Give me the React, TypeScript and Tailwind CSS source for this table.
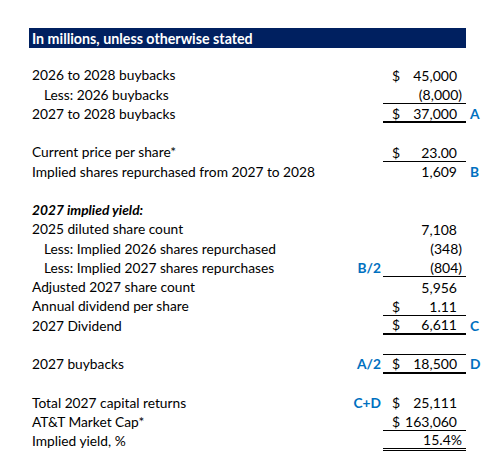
type Row = {
  label?: string;
  indent?: boolean;
  title?: boolean;
  note?: string;
  dollar?: boolean;
  value?: string;
  line?: string;
  mark?: string;
};

const rows: Row[] = [
  { label: '2026 to 2028 buybacks', dollar: true, value: '45,000' },
  { label: 'Less: 2026 buybacks', indent: true, value: '(8,000)', line: 'border-b border-black' },
  { label: '2027 to 2028 buybacks', dollar: true, value: '37,000', line: 'border-b-2 border-black', mark: 'A' },
  {},
  { label: 'Current price per share*', dollar: true, value: '23.00', line: 'border-b border-black' },
  { label: 'Implied shares repurchased from 2027 to 2028', value: '1,609', mark: 'B' },
  {},
  { label: '2027 implied yield:', title: true },
  { label: '2025 diluted share count', value: '7,108' },
  { label: 'Less: Implied 2026 shares repurchased', indent: true, value: '(348)' },
  { label: 'Less: Implied 2027 shares repurchases', indent: true, note: 'B/2', value: '(804)', line: 'border-b border-black' },
  { label: 'Adjusted 2027 share count', value: '5,956' },
  { label: 'Annual dividend per share', dollar: true, value: '1.11', line: 'border-b border-black' },
  { label: '2027 Dividend', dollar: true, value: '6,611', line: 'border-b-2 border-black', mark: 'C' },
  {},
  { label: '2027 buybacks', note: 'A/2', dollar: true, value: '18,500', line: 'border-t border-b-2 border-black', mark: 'D' },
  {},
  { label: 'Total 2027 capital returns', note: 'C+D', dollar: true, value: '25,111' },
  { label: 'AT&T Market Cap*', dollar: true, value: '163,060', line: 'border-b border-black' },
  { label: 'Implied yield, %', value: '15.4%', line: 'border-b-[3px] border-double border-black' },
];

function ValueCell({ row }: { row: Row }) {
  const tight = row.value?.endsWith(')') || row.value?.endsWith('%');
  return (
    <div className={`flex items-center justify-between h-full pt-[1px] text-[14px] ${row.line ?? ''}`}>
      <span className="pl-[9px]">{row.dollar ? '$' : ''}</span>
      <span className={tight ? 'pr-[4px]' : 'pr-[9px]'}>{row.value}</span>
    </div>
  );
}

export default function App() {
  return (
    <div
      className="min-h-screen bg-white text-black pl-[29px] pt-[28px] text-[13.75px]"
      style={{ fontFamily: 'Lato, "Liberation Sans", sans-serif' }}
    >
      {/* HEADER */}
      <div className="w-[437px] h-[20px] bg-[#002060] text-white font-bold text-[14.25px] flex items-center pl-[3px] pt-[1px]">
        In millions, unless otherwise stated
      </div>

      <div className="h-[17.5px]" />

      {/* TABLE */}
      <div className="grid grid-cols-[326px_28px_83px_30px]">
        {rows.map((row, i) => (
          <div key={i} className="contents">
            <div
              className={`h-[19.25px] flex items-center pt-[1px] ${row.indent ? 'pl-[15px]' : 'pl-[3px]'} ${
                row.title ? 'font-bold italic' : ''
              }`}
            >
              {row.label}
            </div>
            <div className="h-[19.25px] flex items-center justify-end pr-[2px] pt-[1px] font-bold text-[#0070c0]">
              {row.note}
            </div>
            <div className="h-[19.25px]">
              <ValueCell row={row} />
            </div>
            <div className="h-[19.25px] flex items-center pl-[4px] pt-[1px] font-bold text-[#0070c0]">
              {row.mark}
            </div>
          </div>
        ))}
      </div>
    </div>
  );
}
